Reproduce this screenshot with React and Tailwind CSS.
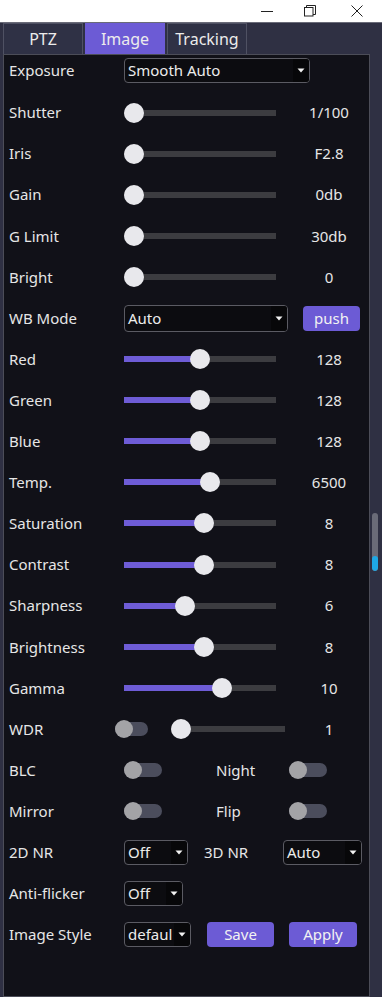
import React from "react";

const FONT = { fontFamily: '"Noto Sans", "Open Sans", "Liberation Sans", sans-serif' };

function Arrow() {
  return (
    <svg width="8" height="5" viewBox="0 0 8 5" className="shrink-0">
      <path d="M0.5 0.5 L7.5 0.5 L4 4.5 Z" fill="#f2f2f2" />
    </svg>
  );
}

function Select({ value, className, h = "h-[25px]", clip = false }) {
  return (
    <div className={`${className} ${h} flex items-center justify-between border border-[#5b5b63] rounded-[4px] bg-[#0c0c10] pl-[3px]`}>
      <span className={`text-[15px] text-[#ececec] whitespace-nowrap ${clip ? "overflow-hidden w-[44px]" : ""}`}>{value}</span>
      <span className="h-full w-[16px] flex items-center justify-center bg-[#070709] rounded-r-[3px] shrink-0">
        <Arrow />
      </span>
    </div>
  );
}

function Slider({ pct, width = 152, filled = true }) {
  const range = width - 20;
  const pos = Math.round(pct * range);
  return (
    <div className="relative h-[22px] shrink-0" style={{ width }}>
      <div className="absolute left-0 right-0 top-[8px] h-[6px] bg-[#3c3c40]" />
      {filled && pct > 0 ? (
        <div className="absolute left-0 top-[8px] h-[6px] bg-[#6e5cd6]" style={{ width: pos + 10 }} />
      ) : null}
      <div className="absolute top-[1px] w-[20px] h-[20px] rounded-full bg-[#e8e8ec]" style={{ left: pos }} />
    </div>
  );
}

function Toggle({ className }) {
  return (
    <div className={`${className} relative h-[14px] rounded-full bg-[#4b4d5c] shrink-0`}>
      <div className="absolute left-0 top-[-2px] w-[18px] h-[18px] rounded-full bg-[#a3a3a6]" />
    </div>
  );
}

function Label({ children, w = "w-[115px]" }) {
  return <span className={`${w} shrink-0 text-[15px] text-[#e6e6e6] whitespace-nowrap`}>{children}</span>;
}

function Row({ children }) {
  return <div className="h-[41.1px] flex items-center pl-[5px]">{children}</div>;
}

function SliderRow({ label, value, pct }) {
  return (
    <Row>
      <Label>{label}</Label>
      <Slider pct={pct} />
      <span className="ml-[14px] w-[78px] text-center text-[15px] text-[#e6e6e6]">{value}</span>
    </Row>
  );
}

const GREY = [
  ["Shutter", "1/100"],
  ["Iris", "F2.8"],
  ["Gain", "0db"],
  ["G Limit", "30db"],
  ["Bright", "0"],
];

const COLOR = [
  ["Red", "128", 0.5],
  ["Green", "128", 0.5],
  ["Blue", "128", 0.5],
  ["Temp.", "6500", 0.576],
  ["Saturation", "8", 0.53],
  ["Contrast", "8", 0.53],
  ["Sharpness", "6", 0.39],
  ["Brightness", "8", 0.53],
  ["Gamma", "10", 0.667],
];

export default function App() {
  return (
    <div className="w-[382px] h-[997px] bg-[#2f3043] flex flex-col overflow-hidden" style={FONT}>
      <div className="h-[23px] bg-white flex items-center justify-end shrink-0 border-b border-[#6a6b78]">
        <svg width="14" height="14" viewBox="0 0 14 14" className="mr-[30px]">
          <path d="M1 7.5 H13" stroke="#222" strokeWidth="1" />
        </svg>
        <svg width="12" height="12" viewBox="0 0 12 12" className="mr-[35px]">
          <rect x="0.5" y="2.5" width="8.5" height="8.5" fill="none" stroke="#222" strokeWidth="1" />
          <path d="M2.5 2.5 V0.5 H11.5 V9.5 H9" fill="none" stroke="#222" strokeWidth="1" />
        </svg>
        <svg width="12" height="12" viewBox="0 0 12 12" className="mr-[19px]">
          <path d="M0.5 0.5 L11.5 11.5 M11.5 0.5 L0.5 11.5" stroke="#222" strokeWidth="1" />
        </svg>
      </div>

      <div className="h-[31px] flex pl-[3px] gap-[2px] shrink-0">
        <div className="w-[80px] border border-b-0 border-[#4f5163] bg-[#2f3145] flex items-center justify-center text-[16px] text-[#ececec]">PTZ</div>
        <div className="w-[80px] bg-[#6c5bd5] flex items-center justify-center text-[16px] text-[#ececec]">Image</div>
        <div className="w-[80px] border border-b-0 border-[#4f5163] bg-[#2f3145] flex items-center justify-center text-[16px] text-[#ececec]">Tracking</div>
      </div>

      <div className="flex flex-1 min-h-0">
        <div className="ml-[3px] w-[367px] border border-[#4c4d58] bg-[#111118] flex flex-col">
          <div className="h-[30px] flex items-center pl-[5px]">
            <Label>Exposure</Label>
            <Select value="Smooth Auto" className="w-[186px]" h="h-[25px]" />
          </div>

          <div className="mt-[7px] flex flex-col">
            {GREY.map(([l, v]) => (
              <SliderRow key={l} label={l} value={v} pct={0} />
            ))}

            <Row>
              <Label>WB Mode</Label>
              <Select value="Auto" className="w-[164px]" h="h-[27px]" />
              <button className="ml-[15px] w-[57px] h-[25px] rounded-[4px] bg-[#6c5bd5] text-[15px] text-[#f2f2f2]">push</button>
            </Row>

            {COLOR.map(([l, v, p]) => (
              <SliderRow key={l} label={l} value={v} pct={p} />
            ))}

            <Row>
              <Label w="w-[106px]">WDR</Label>
              <Toggle className="w-[33px]" />
              <div className="ml-[23px]">
                <Slider pct={0} width={114} />
              </div>
              <span className="ml-[5px] w-[78px] text-center text-[15px] text-[#e6e6e6]">1</span>
            </Row>

            <Row>
              <Label>BLC</Label>
              <Toggle className="w-[38px]" />
              <span className="ml-[54px] w-[73px] text-[15px] text-[#e6e6e6]">Night</span>
              <Toggle className="w-[38px]" />
            </Row>

            <Row>
              <Label>Mirror</Label>
              <Toggle className="w-[38px]" />
              <span className="ml-[54px] w-[73px] text-[15px] text-[#e6e6e6]">Flip</span>
              <Toggle className="w-[38px]" />
            </Row>

            <Row>
              <Label>2D NR</Label>
              <Select value="Off" className="w-[64px]" />
              <span className="ml-[16px] w-[79px] text-[15px] text-[#e6e6e6]">3D NR</span>
              <Select value="Auto" className="w-[79px]" />
            </Row>

            <Row>
              <Label>Anti-flicker</Label>
              <Select value="Off" className="w-[59px]" />
            </Row>

            <Row>
              <Label>Image Style</Label>
              <Select value="default" className="w-[67px]" clip />
              <button className="ml-[16px] w-[67px] h-[25px] rounded-[4px] bg-[#6c5bd5] text-[15px] text-[#f2f2f2]">Save</button>
              <button className="ml-[15px] w-[68px] h-[25px] rounded-[4px] bg-[#6c5bd5] text-[15px] text-[#f2f2f2]">Apply</button>
            </Row>
          </div>
        </div>

        <div className="ml-[2px] mt-[459px] w-[6px] h-[58px] rounded-full bg-[#6a6b78] flex flex-col justify-end overflow-hidden">
          <div className="h-[15px] rounded-full bg-[#1ea8e6]" />
        </div>
      </div>
    </div>
  );
}
